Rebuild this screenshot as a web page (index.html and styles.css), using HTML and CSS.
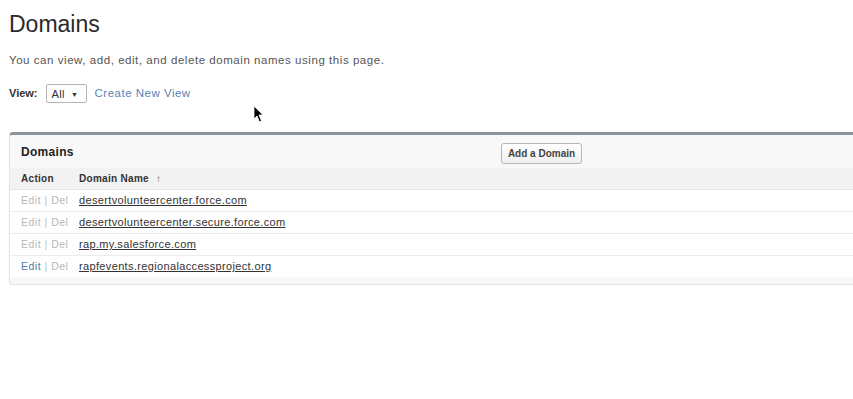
FILE: index.html
```html
<!DOCTYPE html>
<html lang="en">
<head>
    <meta charset="UTF-8">
    <title>Domains</title>
    <link rel="stylesheet" href="styles.css">
</head>
<body>
    <div class="page">
        <h1>Domains</h1>
        <p class="intro">You can view, add, edit, and delete domain names using this page.</p>

        <div class="view-row">
            <span class="view-label">View:</span>
            <span class="view-select">All <span class="caret">&#9660;</span></span>
            <a class="view-link" href="#">Create New View</a>
        </div>

        <div class="panel">
            <div class="panel-head">
                <span class="panel-title">Domains</span>
                <button class="btn">Add a Domain</button>
            </div>
            <table class="list">
                <thead>
                    <tr>
                        <th class="col-action">Action</th>
                        <th>Domain Name <span class="sort">&#8593;</span></th>
                    </tr>
                </thead>
                <tbody>
                    <tr>
                        <td class="col-action"><span class="act">Edit</span> | <span class="act">Del</span></td>
                        <td><a href="#">desertvolunteercenter.force.com</a></td>
                    </tr>
                    <tr>
                        <td class="col-action"><span class="act">Edit</span> | <span class="act">Del</span></td>
                        <td><a href="#">desertvolunteercenter.secure.force.com</a></td>
                    </tr>
                    <tr>
                        <td class="col-action"><span class="act">Edit</span> | <span class="act">Del</span></td>
                        <td><a href="#">rap.my.salesforce.com</a></td>
                    </tr>
                    <tr>
                        <td class="col-action"><span class="act act-on">Edit</span> | <span class="act">Del</span></td>
                        <td><a href="#">rapfevents.regionalaccessproject.org</a></td>
                    </tr>
                </tbody>
            </table>
        </div>
    </div>

    <!-- mouse pointer caught in the screenshot -->
    <svg class="cursor" width="12" height="18" viewBox="0 0 12 18">
        <path d="M1 1 L1 14 L4 11 L6.5 17 L8.5 16 L6 10 L10 10 Z" fill="#000" stroke="#fff" stroke-width="0.8"/>
    </svg>
</body>
</html>
```

FILE: styles.css
```css
* {
    margin: 0;
    padding: 0;
    box-sizing: border-box;
}

body {
    font-family: Arial, 'Liberation Sans', sans-serif;
    background: #ffffff;
    color: #333333;
    font-size: 11px;
    overflow: hidden;
}

.page {
    padding: 11px 0 0 9px;
}

h1 {
    font-size: 23px;
    font-weight: normal;
    color: #2a2a2a;
    line-height: 26px;
    margin-bottom: 17px;
}

.intro {
    font-size: 11.5px;
    letter-spacing: 0.55px;
    color: #555555;
    margin-bottom: 17px;
}

.view-row {
    display: flex;
    align-items: center;
    gap: 8px;
    height: 20px;
    letter-spacing: 0.3px;
}

.view-label {
    font-weight: bold;
    color: #333333;
    letter-spacing: 0;
}

.view-select {
    border: 1px solid #b5b5b5;
    border-radius: 2px;
    padding: 2px 5px 2px 5px;
    height: 19px;
    width: 41px;
    background: #fdfdfd;
    color: #333333;
    font-size: 11px;
    line-height: 14px;
}

.caret {
    font-size: 7px;
    margin-left: 3px;
    vertical-align: 1px;
}

.view-link {
    color: #5a84b3;
    text-decoration: none;
    font-size: 11.5px;
    letter-spacing: 0.5px;
}

.panel {
    margin-top: 29px;
    margin-right: -20px;
    border-top: 3px solid #8a959c;
    border-left: 1px solid #e4e4e4;
    border-bottom: 1px solid #e4e4e4;
    border-radius: 4px 0 0 4px;
    background: #f8f8f8;
    padding-bottom: 7px;
    box-shadow: 0 1px 2px rgba(0, 0, 0, 0.05);
}

.panel-head {
    display: flex;
    align-items: center;
    height: 33px;
    padding-left: 11px;
}

.panel-title {
    font-size: 12px;
    font-weight: bold;
    color: #222222;
    letter-spacing: 0.3px;
    width: 480px;
}

.btn {
    font-family: Arial, 'Liberation Sans', sans-serif;
    font-size: 10px;
    font-weight: bold;
    color: #444444;
    background: linear-gradient(#ffffff, #f0f0f0);
    border: 1px solid #b5b5b5;
    border-radius: 3px;
    height: 21px;
    width: 81px;
    padding: 0;
    margin-top: 3px;
}

.list {
    width: 100%;
    border-collapse: collapse;
    background: #ffffff;
}

.list th {
    background: #f2f2f2;
    text-align: left;
    font-size: 10px;
    font-weight: bold;
    color: #333333;
    letter-spacing: 0.3px;
    height: 21px;
    padding: 0;
    border-bottom: 1px solid #e6e6e6;
}

.list td {
    height: 22px;
    border-bottom: 1px solid #ececec;
    font-size: 11px;
    letter-spacing: 0.35px;
}

.list tbody tr:last-child td {
    border-bottom: none;
}

.col-action {
    width: 69px;
    padding-left: 11px !important;
    color: #c0c0c0;
}

.list td.col-action {
    font-size: 10.5px;
    letter-spacing: 0.5px;
}

.act {
    color: #b8b8b8;
}

.act-on {
    color: #4f7ba8;
}

.sort {
    font-size: 10px;
    color: #666666;
    margin-left: 4px;
}

.list td a {
    color: #333333;
    text-decoration: underline;
}

.cursor {
    position: absolute;
    left: 253px;
    top: 105px;
}
```
